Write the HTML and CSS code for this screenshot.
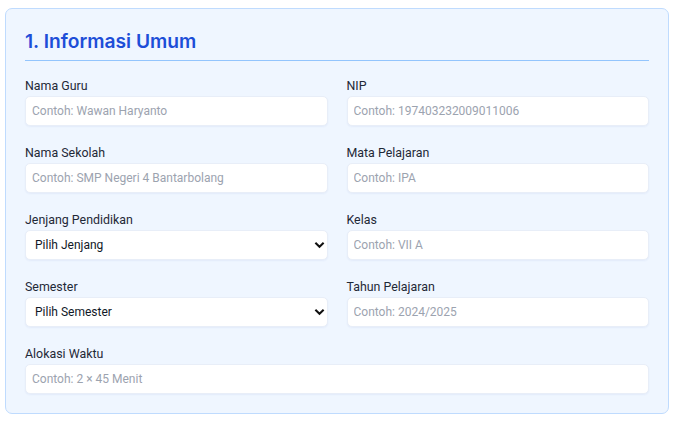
FILE: index.html
```html
<!DOCTYPE html>
<html lang="id">
<head>
    <meta charset="UTF-8">
    <meta name="viewport" content="width=device-width, initial-scale=1.0">
    <title>Informasi Umum</title>
    <link rel="stylesheet" href="styles.css">
</head>
<body>
    <section class="section-card">
        <h2 class="section-title">1. Informasi Umum</h2>

        <div class="form-grid">
            <div class="form-group">
                <label for="namaGuru">Nama Guru</label>
                <input type="text" id="namaGuru" class="form-input" placeholder="Contoh: Wawan Haryanto">
            </div>
            <div class="form-group">
                <label for="nip">NIP</label>
                <input type="text" id="nip" class="form-input" placeholder="Contoh: 197403232009011006">
            </div>

            <div class="form-group">
                <label for="namaSekolah">Nama Sekolah</label>
                <input type="text" id="namaSekolah" class="form-input" placeholder="Contoh: SMP Negeri 4 Bantarbolang">
            </div>
            <div class="form-group">
                <label for="mapel">Mata Pelajaran</label>
                <input type="text" id="mapel" class="form-input" placeholder="Contoh: IPA">
            </div>

            <div class="form-group">
                <label for="jenjang">Jenjang Pendidikan</label>
                <div class="select-wrap">
                    <select id="jenjang" class="form-input form-select">
                        <option value="">Pilih Jenjang</option>
                        <option>SD</option>
                        <option>SMP</option>
                        <option>SMA</option>
                    </select>
                    <svg class="select-arrow" viewBox="0 0 12 8" width="11" height="8"><path d="M1.5 1.5 6 6l4.5-4.5" fill="none" stroke="#111" stroke-width="2.2"/></svg>
                </div>
            </div>
            <div class="form-group">
                <label for="kelas">Kelas</label>
                <input type="text" id="kelas" class="form-input" placeholder="Contoh: VII A">
            </div>

            <div class="form-group">
                <label for="semester">Semester</label>
                <div class="select-wrap">
                    <select id="semester" class="form-input form-select">
                        <option value="">Pilih Semester</option>
                        <option>Ganjil</option>
                        <option>Genap</option>
                    </select>
                    <svg class="select-arrow" viewBox="0 0 12 8" width="11" height="8"><path d="M1.5 1.5 6 6l4.5-4.5" fill="none" stroke="#111" stroke-width="2.2"/></svg>
                </div>
            </div>
            <div class="form-group">
                <label for="tahun">Tahun Pelajaran</label>
                <input type="text" id="tahun" class="form-input" placeholder="Contoh: 2024/2025">
            </div>

            <div class="form-group full">
                <label for="alokasi">Alokasi Waktu</label>
                <input type="text" id="alokasi" class="form-input" placeholder="Contoh: 2 × 45 Menit">
            </div>
        </div>
    </section>
</body>
</html>
```

FILE: styles.css
```css
* {
    margin: 0;
    padding: 0;
    box-sizing: border-box;
}

body {
    font-family: 'Inter', 'Liberation Sans', sans-serif;
    background: #ffffff;
    padding: 8px 9px 8px 5px;
    color: #374151;
}

.section-card {
    background: #eff6ff;
    border: 1px solid #bfdbfe;
    border-radius: 7px;
    padding: 20px 19px 19px 19px;
}

.section-title {
    font-size: 19.2px;
    line-height: 25px;
    font-weight: 600;
    color: #1d4ed8;
    padding-bottom: 6px;
    border-bottom: 1px solid #93c5fd;
    margin-bottom: 15px;
}

.form-grid {
    display: grid;
    grid-template-columns: 1fr 1fr;
    column-gap: 19px;
    row-gap: 17px;
}

.form-group.full {
    grid-column: 1 / -1;
}

.form-group label {
    display: block;
    font-family: 'Roboto', 'Inter', sans-serif;
    font-size: 12.4px;
    line-height: 20px;
    font-weight: 400;
    color: #1f2937;
}

.form-input {
    display: block;
    width: 100%;
    height: 30px;
    padding: 0 6px;
    border: 1px solid #e8eef8;
    border-radius: 5px;
    background: #ffffff;
    font-family: 'Roboto', 'Inter', sans-serif;
    font-size: 12px;
    color: #111827;
    box-shadow: 0 1px 2px rgba(30, 64, 175, 0.06);
    outline: none;
}

.form-input::placeholder {
    color: #9ca3af;
}

.select-wrap {
    position: relative;
}

.form-select {
    appearance: none;
    -webkit-appearance: none;
    padding-left: 9px;
    cursor: pointer;
}

.select-arrow {
    position: absolute;
    right: 3px;
    top: 11px;
    pointer-events: none;
}
```
